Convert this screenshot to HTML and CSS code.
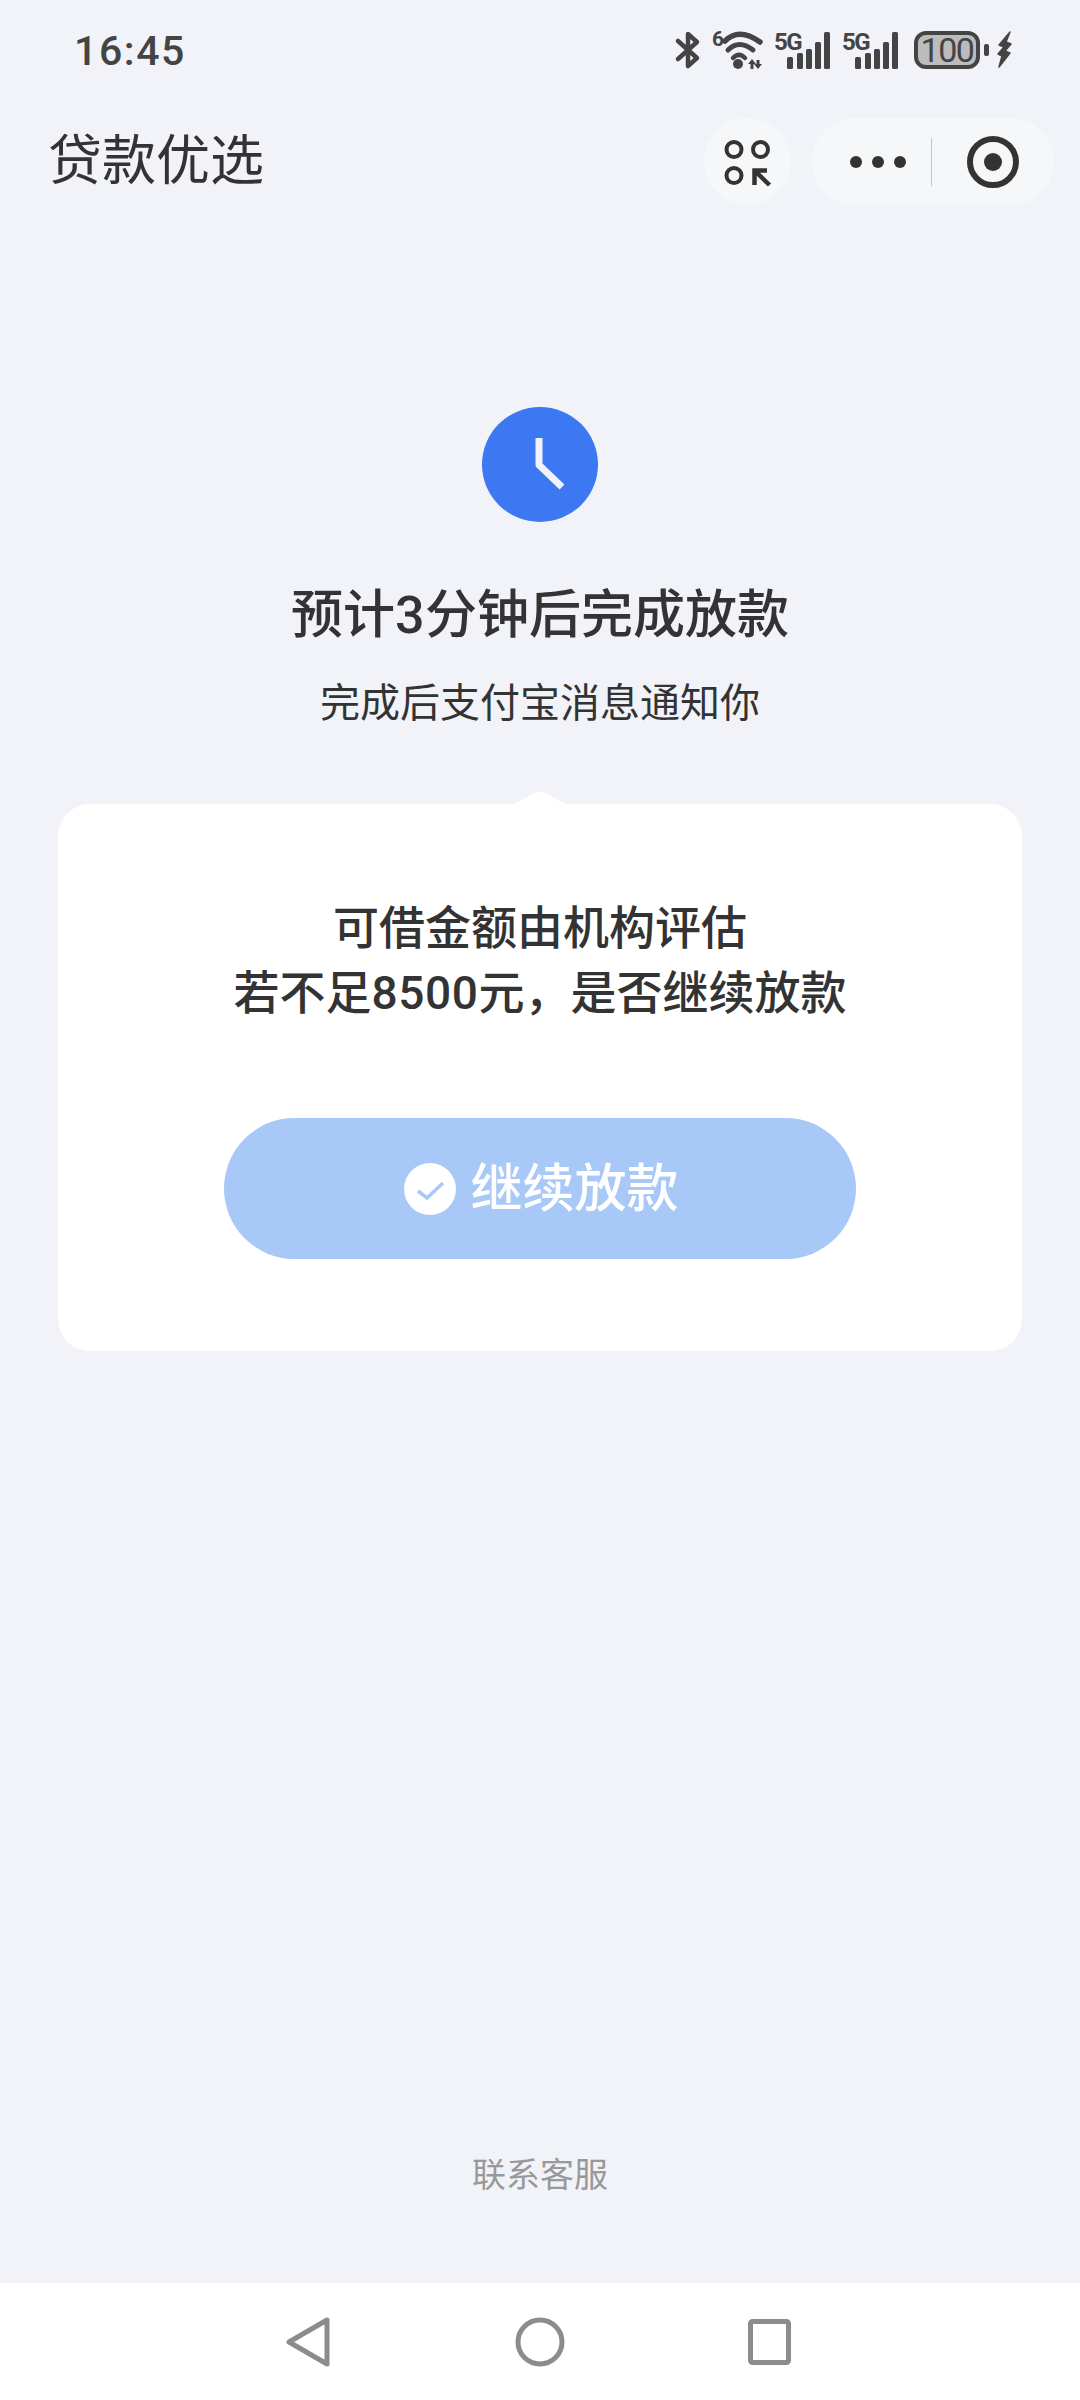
FILE: index.html
```html
<!DOCTYPE html>
<html>
<head>
    <title>贷款优选</title>
    <meta charset="utf-8" />
    <link rel="stylesheet" href="styles.css">
</head>
<body>
    <div class="page">
        <div class="status">
            <span class="time">16:45</span>
            <div class="status-icons">
                <svg class="ic-bt" width="24" height="38" viewBox="0 0 24 38">
                    <path d="M2 10 L21 27 L12 35 L12 3 L21 11 L2 28" fill="none" stroke="#444" stroke-width="4.5" stroke-linejoin="round" stroke-linecap="round"/>
                </svg>
                <svg class="ic-wifi" width="52" height="40" viewBox="0 0 52 40">
                    <text x="1" y="16" class="sig-six">6</text>
                    <path d="M14 11 Q28 -3 49 12" fill="none" stroke="#444" stroke-width="5.5" stroke-linecap="round"/>
                    <path d="M17 20 Q28 9 42 20" fill="none" stroke="#444" stroke-width="5" stroke-linecap="round"/>
                    <path d="M22 28 Q28 22 34 28" fill="none" stroke="#444" stroke-width="4.5" stroke-linecap="round"/>
                    <circle cx="27" cy="34" r="5" fill="#444"/>
                    <path d="M41 32 L41 39 M47 30 L47 37" stroke="#444" stroke-width="3"/>
                    <path d="M41 29 L37 34 L45 34 Z M47 39 L43 34 L51 34 Z" fill="#444"/>
                </svg>
                <svg class="ic-sig" width="57" height="38" viewBox="0 0 57 38">
                    <text x="0" y="19" class="sig-text">5G</text>
                    <rect x="13" y="26" width="6" height="12" rx="1.5" fill="#444"/>
                    <rect x="23" y="22" width="6" height="16" rx="1.5" fill="#444"/>
                    <rect x="32" y="18" width="6" height="20" rx="1.5" fill="#444"/>
                    <rect x="41" y="11" width="6" height="27" rx="1.5" fill="#444"/>
                    <rect x="50" y="1" width="6" height="37" rx="1.5" fill="#444"/>
                </svg>
                <svg class="ic-sig" width="57" height="38" viewBox="0 0 57 38">
                    <text x="0" y="19" class="sig-text">5G</text>
                    <rect x="13" y="26" width="6" height="12" rx="1.5" fill="#444"/>
                    <rect x="23" y="22" width="6" height="16" rx="1.5" fill="#444"/>
                    <rect x="32" y="18" width="6" height="20" rx="1.5" fill="#444"/>
                    <rect x="41" y="11" width="6" height="27" rx="1.5" fill="#444"/>
                    <rect x="50" y="1" width="6" height="37" rx="1.5" fill="#444"/>
                </svg>
                <svg class="ic-batt" width="76" height="38" viewBox="0 0 76 38">
                    <rect x="1" y="2" width="62" height="34" rx="10" fill="#bcbcbc" stroke="#444" stroke-width="4"/>
                    <text x="32" y="31" text-anchor="middle" class="batt-text">100</text>
                    <rect x="69" y="13" width="5" height="12" rx="2" fill="#444"/>
                </svg>
                <svg class="ic-bolt" width="15" height="38" viewBox="0 0 15 38">
                    <path d="M13 1 L2 14 L7 16 L1 23 L5 25 L2 36 L13 22 L8 20 L14 13 L9 11 Z" fill="#444" stroke="#444" stroke-width="1.5" stroke-linejoin="round"/>
                </svg>
            </div>
        </div>

        <div class="topbar">
            <span class="title">贷款优选</span>
            <div class="top-actions">
                <div class="scan-btn">
                    <svg width="44" height="44" viewBox="0 0 44 44">
                        <circle cx="8" cy="9.5" r="7.5" fill="none" stroke="#333" stroke-width="4"/>
                        <circle cx="34.5" cy="9.5" r="7.5" fill="none" stroke="#333" stroke-width="4"/>
                        <circle cx="8" cy="35.5" r="7.5" fill="none" stroke="#333" stroke-width="4"/>
                        <path d="M28.5 45 L28.5 30.5 L41 30.5 M30 32 L43.5 45" fill="none" stroke="#333" stroke-width="4.5"/>
                    </svg>
                </div>
                <div class="capsule">
                    <div class="dots"><i></i><i></i><i></i></div>
                    <div class="divider"></div>
                    <div class="record"><i></i></div>
                </div>
            </div>
        </div>

        <div class="main">
            <div class="clock">
                <svg width="116" height="116" viewBox="0 0 116 116">
                    <path d="M57 31 L57 58 L80 80" fill="none" stroke="#f1f3f8" stroke-width="7" stroke-linejoin="round"/>
                </svg>
            </div>
            <h1 class="heading">预计<span class="num">3</span>分钟后完成放款</h1>
            <p class="sub">完成后支付宝消息通知你</p>

            <div class="card">
                <svg class="card-tip" width="64" height="13" viewBox="0 0 64 13">
                    <path d="M0 13 C12 13 22 0 32 0 C42 0 52 13 64 13 Z" fill="#fff"/>
                </svg>
                <p class="card-text">可借金额由机构评估<br>若不足<span class="num">8500</span>元，是否继续放款</p>
                <div class="confirm">
                    <svg width="52" height="52" viewBox="0 0 52 52">
                        <circle cx="26" cy="26" r="26" fill="#fff"/>
                        <path d="M14 28 L23 35 L39 20" fill="none" stroke="#a8c8f8" stroke-width="3.5"/>
                    </svg>
                    <span class="confirm-label">继续放款</span>
                </div>
            </div>

            <div class="service">联系客服</div>
        </div>

        <div class="navbar">
            <svg width="44" height="50" viewBox="0 0 44 50">
                <path d="M3 25 L41 3 L41 47 Z" fill="none" stroke="#8c8c8c" stroke-width="5" stroke-linejoin="round"/>
            </svg>
            <svg width="50" height="50" viewBox="0 0 50 50">
                <circle cx="25" cy="25" r="22" fill="none" stroke="#8c8c8c" stroke-width="5"/>
            </svg>
            <svg class="nav-square" width="43" height="46" viewBox="0 0 43 46">
                <rect x="2.5" y="2.5" width="38" height="41" rx="2" fill="none" stroke="#8c8c8c" stroke-width="5"/>
            </svg>
        </div>
    </div>
</body>
</html>
```

FILE: styles.css
```css
* {
    box-sizing: border-box;
}
body {
    margin: 0;
    padding: 0;
    font-family: Roboto, "Noto Sans CJK SC", sans-serif;
    color: #333;
}
svg {
    overflow: visible;
}
.page {
    width: 1080px;
    height: 2400px;
    background-color: #f1f3f8;
    display: flex;
    flex-direction: column;
    overflow: hidden;
}
.status {
    height: 100px;
    padding: 0 68px 0 74px;
    display: flex;
    justify-content: space-between;
    align-items: center;
    flex-shrink: 0;
}
.time {
    margin-top: 2px;
    font-size: 41px;
    font-weight: 500;
    letter-spacing: 1.6px;
    color: #444;
}
.status-icons {
    display: flex;
    align-items: center;
}
.ic-bt {
    margin-right: 11px;
}
.ic-wifi {
    margin-right: 11px;
}
.ic-sig {
    margin-right: 11px;
}
.ic-batt {
    margin-left: 5px;
    margin-right: 6px;
}
.sig-text {
    font-family: Roboto, sans-serif;
    font-size: 24px;
    font-weight: 700;
    fill: #444;
    letter-spacing: -1.5px;
}
.sig-six {
    font-family: Roboto, sans-serif;
    font-size: 21px;
    font-weight: 700;
    fill: #444;
}
.batt-text {
    font-family: Roboto, sans-serif;
    font-size: 34px;
    font-weight: 400;
    fill: #444;
    letter-spacing: -1.5px;
}
.topbar {
    height: 123px;
    padding: 0 26px 0 48px;
    display: flex;
    justify-content: space-between;
    align-items: center;
    flex-shrink: 0;
}
.title {
    font-size: 54px;
    font-weight: 400;
    line-height: 60px;
}
.top-actions {
    display: flex;
    gap: 21px;
}
.scan-btn {
    width: 87px;
    height: 87px;
    border-radius: 50%;
    background-color: #f6f7f9;
    display: flex;
    justify-content: center;
    align-items: center;
}
.capsule {
    width: 242px;
    height: 87px;
    border-radius: 44px;
    background-color: #f6f7f9;
    display: flex;
    align-items: center;
    padding-left: 38px;
}
.dots {
    display: flex;
    gap: 10px;
}
.dots i {
    display: block;
    width: 12px;
    height: 12px;
    border-radius: 50%;
    background-color: #333;
}
.divider {
    width: 1px;
    height: 48px;
    background-color: #c4c4c6;
    margin-left: 25px;
}
.record {
    width: 52px;
    height: 52px;
    margin-left: 35px;
    border: 6px solid #333;
    border-radius: 50%;
    display: flex;
    justify-content: center;
    align-items: center;
}
.record i {
    display: block;
    width: 18px;
    height: 18px;
    border-radius: 50%;
    background-color: #333;
}
.main {
    flex: 1;
    display: flex;
    flex-direction: column;
    align-items: center;
}
.clock {
    width: 116px;
    height: 115px;
    margin-top: 184px;
    border-radius: 50%;
    background-color: #3b78f2;
    flex-shrink: 0;
}
.clock svg {
    display: block;
}
.heading {
    margin: 64px 0 0;
    font-size: 52px;
    font-weight: 500;
    line-height: 60px;
}
.sub {
    margin: 28px 0 0;
    font-size: 40px;
    font-weight: 400;
    line-height: 60px;
}
.num {
    letter-spacing: 0.6px;
}
.card {
    position: relative;
    width: 964px;
    margin-top: 70px;
    padding: 92px 0 92px;
    background-color: #fff;
    border-radius: 32px;
}
.card-tip {
    position: absolute;
    top: -12px;
    left: 450px;
}
.card-text {
    margin: 0;
    font-size: 46px;
    font-weight: 500;
    line-height: 65px;
    text-align: center;
}
.confirm {
    width: 632px;
    height: 141px;
    margin: 92px auto 0;
    padding-left: 3px;
    border-radius: 71px;
    background-color: #a8c8f8;
    display: flex;
    justify-content: center;
    align-items: center;
    gap: 14px;
    color: #fff;
    font-size: 52px;
    font-weight: 500;
}
.confirm-label {
    margin-bottom: 8px;
}
.service {
    margin-top: auto;
    margin-bottom: 83px;
    font-size: 34px;
    line-height: 50px;
    color: #999;
}
.navbar {
    height: 117px;
    padding: 0 0 0 286px;
    background-color: #fff;
    display: flex;
    align-items: center;
    gap: 185px;
    flex-shrink: 0;
}
.nav-square {
    margin-left: -2px;
}
```
